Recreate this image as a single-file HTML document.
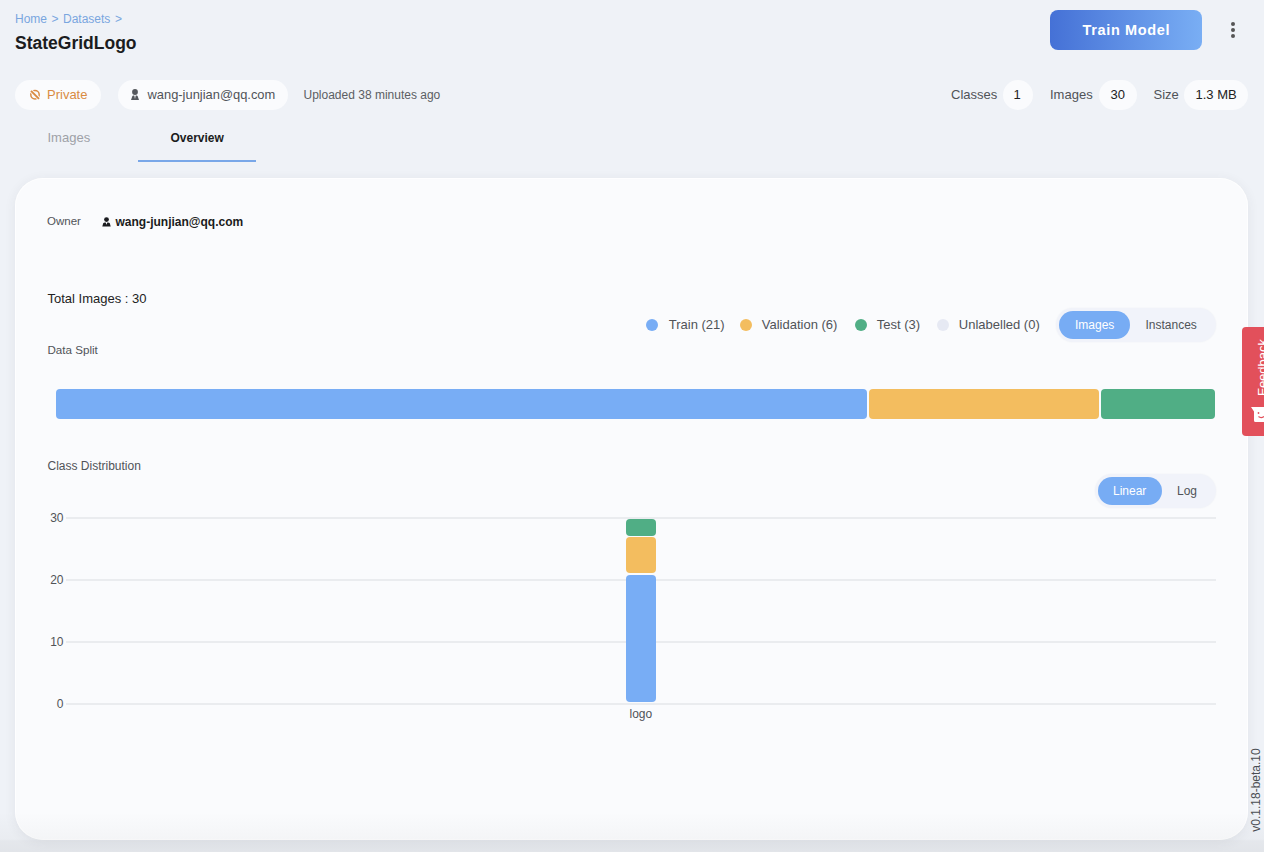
<!DOCTYPE html>
<html><head><meta charset="utf-8">
<style>
*{box-sizing:border-box;margin:0;padding:0}
html,body{width:1264px;height:852px;overflow:hidden}
body{background:#eff2f7;font-family:"Liberation Sans",sans-serif;position:relative;color:#505358}
.a{position:absolute;white-space:pre}
.t12{font-size:12px;line-height:12px}
.t13{font-size:13px;line-height:13px}
.t14{font-size:14px;line-height:14px}
.chip{position:absolute;background:#fafbfd;border-radius:16px;height:30px;top:80px}
.card{position:absolute;left:15px;top:178px;width:1233px;height:662px;border-radius:28px;background:#fafbfd;box-shadow:inset 0 0 0 1px rgba(255,255,255,0.7),0 2px 12px rgba(50,60,70,0.075)}
.seg{position:absolute;border-radius:4px}
.grid{position:absolute;left:66px;width:1150px;height:2px;background:#eaecef}
.dot{position:absolute;width:12px;height:12px;border-radius:6px;top:319px}
.tog{position:absolute;background:#f1f3fa;border-radius:17px;height:34px;box-shadow:0 0 2px rgba(40,50,80,0.05)}
.pill{position:absolute;background:#77acf4;border-radius:14px;height:28px}
</style></head>
<body>
<!-- breadcrumb -->
<div class="a t12" style="left:15px;top:13.2px;color:#79a6df">Home</div>
<div class="a t12" style="left:51.5px;top:13.2px;color:#79a6df">&gt;</div>
<div class="a t12" style="left:63px;top:13.2px;color:#79a6df">Datasets</div>
<div class="a t12" style="left:115px;top:13.2px;color:#79a6df">&gt;</div>
<div class="a" style="left:15px;top:34.6px;font-size:17.5px;line-height:17.5px;font-weight:700;color:#1b1c20">StateGridLogo</div>

<!-- chips row -->
<div class="chip" style="left:15px;width:86px"></div>
<svg class="a" style="left:29px;top:89px" width="12" height="12" viewBox="0 0 12 12"><circle cx="6" cy="5.8" r="4.2" fill="none" stroke="#d98b42" stroke-width="1.5"/><line x1="2" y1="1.8" x2="10" y2="9.8" stroke="#fafbfd" stroke-width="3.6"/><line x1="2" y1="1.8" x2="10" y2="9.8" stroke="#d98b42" stroke-width="1.9"/></svg>
<div class="a t13" style="left:47px;top:88.2px;color:#d98b42">Private</div>

<div class="chip" style="left:117.5px;width:170px"></div>
<svg class="a" style="left:130px;top:88px" width="10" height="13" viewBox="0 0 10 13"><circle cx="5" cy="4" r="2.9" fill="#55585d"/><path d="M1 12 L2.3 8.2 Q2.6 7.6 3.3 7.6 L4.3 7.6 L5 11 L5.7 7.6 L6.7 7.6 Q7.4 7.6 7.7 8.2 L9 12 Z" fill="#55585d"/></svg>
<div class="a" style="left:147.5px;top:88.8px;font-size:12.9px;line-height:12.9px;color:#505358">wang-junjian@qq.com</div>

<div class="a t12" style="left:303.5px;top:89px;color:#5b5e63">Uploaded 38 minutes ago</div>

<!-- right stats -->
<div class="a t13" style="left:951px;top:88.3px">Classes</div>
<div class="chip" style="left:1003px;width:30px"></div>
<div class="a t13" style="left:1013.5px;top:88.3px;color:#222">1</div>
<div class="a t13" style="left:1050px;top:88.3px">Images</div>
<div class="chip" style="left:1099px;width:38px"></div>
<div class="a t13" style="left:1110.5px;top:88.3px;color:#222">30</div>
<div class="a t13" style="left:1153.5px;top:88.3px">Size</div>
<div class="chip" style="left:1184px;width:64px"></div>
<div class="a t13" style="left:1195.5px;top:88.3px;color:#222">1.3 MB</div>

<!-- train button -->
<div class="a" style="left:1050px;top:10px;width:152px;height:40px;border-radius:8px;background:linear-gradient(90deg,#4571d6,#79aef4)"></div>
<div class="a" style="left:1082.5px;top:22.7px;font-size:14.5px;line-height:14.5px;font-weight:700;color:#fff;letter-spacing:0.65px">Train Model</div>
<div class="a" style="left:1231px;top:22px;width:4px;height:4px;border-radius:2px;background:#555"></div>
<div class="a" style="left:1231px;top:28px;width:4px;height:4px;border-radius:2px;background:#555"></div>
<div class="a" style="left:1231px;top:34px;width:4px;height:4px;border-radius:2px;background:#555"></div>

<!-- tabs -->
<div class="a t13" style="left:47.5px;top:131.4px;color:#9ea1a7">Images</div>
<div class="a" style="left:170.5px;top:131.8px;font-size:12px;line-height:12px;font-weight:700;color:#1b1c20">Overview</div>
<div class="a" style="left:138px;top:160px;width:118px;height:2px;background:#79a7e8"></div>

<!-- card -->
<div class="card"></div>

<div class="a" style="left:47px;top:216px;font-size:11.5px;line-height:11.5px">Owner</div>
<svg class="a" style="left:102px;top:217px" width="9" height="10" viewBox="0 0 9 10"><circle cx="4.5" cy="2.6" r="2.4" fill="#1b1c20"/><path d="M0.3 9.5 L1.2 6.3 Q1.7 5.4 3 5.4 L3.7 5.4 L4.5 7.8 L5.3 5.4 L6 5.4 Q7.3 5.4 7.8 6.3 L8.7 9.5 Z" fill="#1b1c20"/></svg>
<div class="a" style="left:115.5px;top:216.3px;font-size:12px;line-height:12px;font-weight:700;color:#1b1c20">wang-junjian@qq.com</div>

<div class="a t13" style="left:47.5px;top:292.2px;color:#222">Total Images : 30</div>
<div class="a" style="left:47.5px;top:344.1px;font-size:11.6px;line-height:11.6px">Data Split</div>

<!-- legend -->
<div class="dot" style="left:646px;background:#78adf5"></div>
<div class="a t13" style="left:668.8px;top:317.9px">Train (21)</div>
<div class="dot" style="left:740px;background:#f3bd5f"></div>
<div class="a t13" style="left:761.8px;top:317.9px">Validation (6)</div>
<div class="dot" style="left:855px;background:#50ae85"></div>
<div class="a t13" style="left:876.8px;top:317.9px">Test (3)</div>
<div class="dot" style="left:937px;background:#e6e9f3"></div>
<div class="a t13" style="left:958.8px;top:317.9px">Unlabelled (0)</div>

<div class="tog" style="left:1056px;top:308px;width:160px"></div>
<div class="pill" style="left:1059px;top:311px;width:71px"></div>
<div class="a t12" style="left:1075px;top:319.3px;color:#fff">Images</div>
<div class="a t12" style="left:1145.5px;top:319.3px">Instances</div>

<!-- data split bar -->
<div class="seg" style="left:56px;top:389px;width:811px;height:30px;background:#78adf5"></div>
<div class="seg" style="left:869px;top:389px;width:230px;height:30px;background:#f3bd5f"></div>
<div class="seg" style="left:1101px;top:389px;width:114px;height:30px;background:#50ae85"></div>

<div class="a t12" style="left:47.5px;top:459.7px">Class Distribution</div>

<div class="tog" style="left:1095px;top:474px;width:121px"></div>
<div class="pill" style="left:1097.5px;top:477px;width:64.5px"></div>
<div class="a t12" style="left:1113px;top:484.8px;color:#fff">Linear</div>
<div class="a t12" style="left:1177px;top:484.8px">Log</div>

<!-- chart -->
<div class="grid" style="top:517px"></div>
<div class="grid" style="top:579px"></div>
<div class="grid" style="top:641px"></div>
<div class="grid" style="top:702.5px"></div>
<div class="a t12" style="right:1200.5px;top:512.3px;text-align:right">30</div>
<div class="a t12" style="right:1200.5px;top:574.2px;text-align:right">20</div>
<div class="a t12" style="right:1200.5px;top:636.1px;text-align:right">10</div>
<div class="a t12" style="right:1200.5px;top:698px;text-align:right">0</div>

<div class="seg" style="left:626px;top:519px;width:30px;height:17px;background:#50ae85"></div>
<div class="seg" style="left:626px;top:537.3px;width:30px;height:35.7px;background:#f3bd5f"></div>
<div class="seg" style="left:626px;top:574.5px;width:30px;height:127.5px;background:#78adf5"></div>
<div class="a t12" style="left:629.5px;top:708px">logo</div>

<!-- feedback tab -->
<div class="a" style="left:1242px;top:327px;width:30px;height:109px;border-radius:4px;background:#e2505b"></div>
<div class="a" style="left:1232px;top:360.8px;width:60px;height:13px;font-size:13px;line-height:13px;color:#fff;transform:rotate(-90deg);text-align:center">Feedback</div>
<svg class="a" style="left:1250px;top:406px" width="14" height="17" viewBox="0 0 14 17"><path d="M1 1 L14 1 L14 16 L5.5 16 Q4 16 4 14.5 L4 5.5 Z" fill="#fff"/><circle cx="8.5" cy="7" r="0.9" fill="#e2505b"/><path d="M8.5 10.6 Q11 12.6 14 10.6" stroke="#e2505b" stroke-width="1.3" fill="none"/></svg>

<!-- version -->
<div class="a t12" style="left:1213.5px;top:783.5px;width:84px;height:12px;color:#4a4d52;transform:rotate(-90deg);text-align:center">v0.1.18-beta.10</div>
<div class="a" style="left:0;top:812px;width:1264px;height:40px;background:linear-gradient(180deg,rgba(60,60,60,0) 0%,rgba(60,60,60,0.03) 68%,rgba(60,60,60,0.06) 72%,rgba(60,60,60,0.075) 100%)"></div>
</body></html>
